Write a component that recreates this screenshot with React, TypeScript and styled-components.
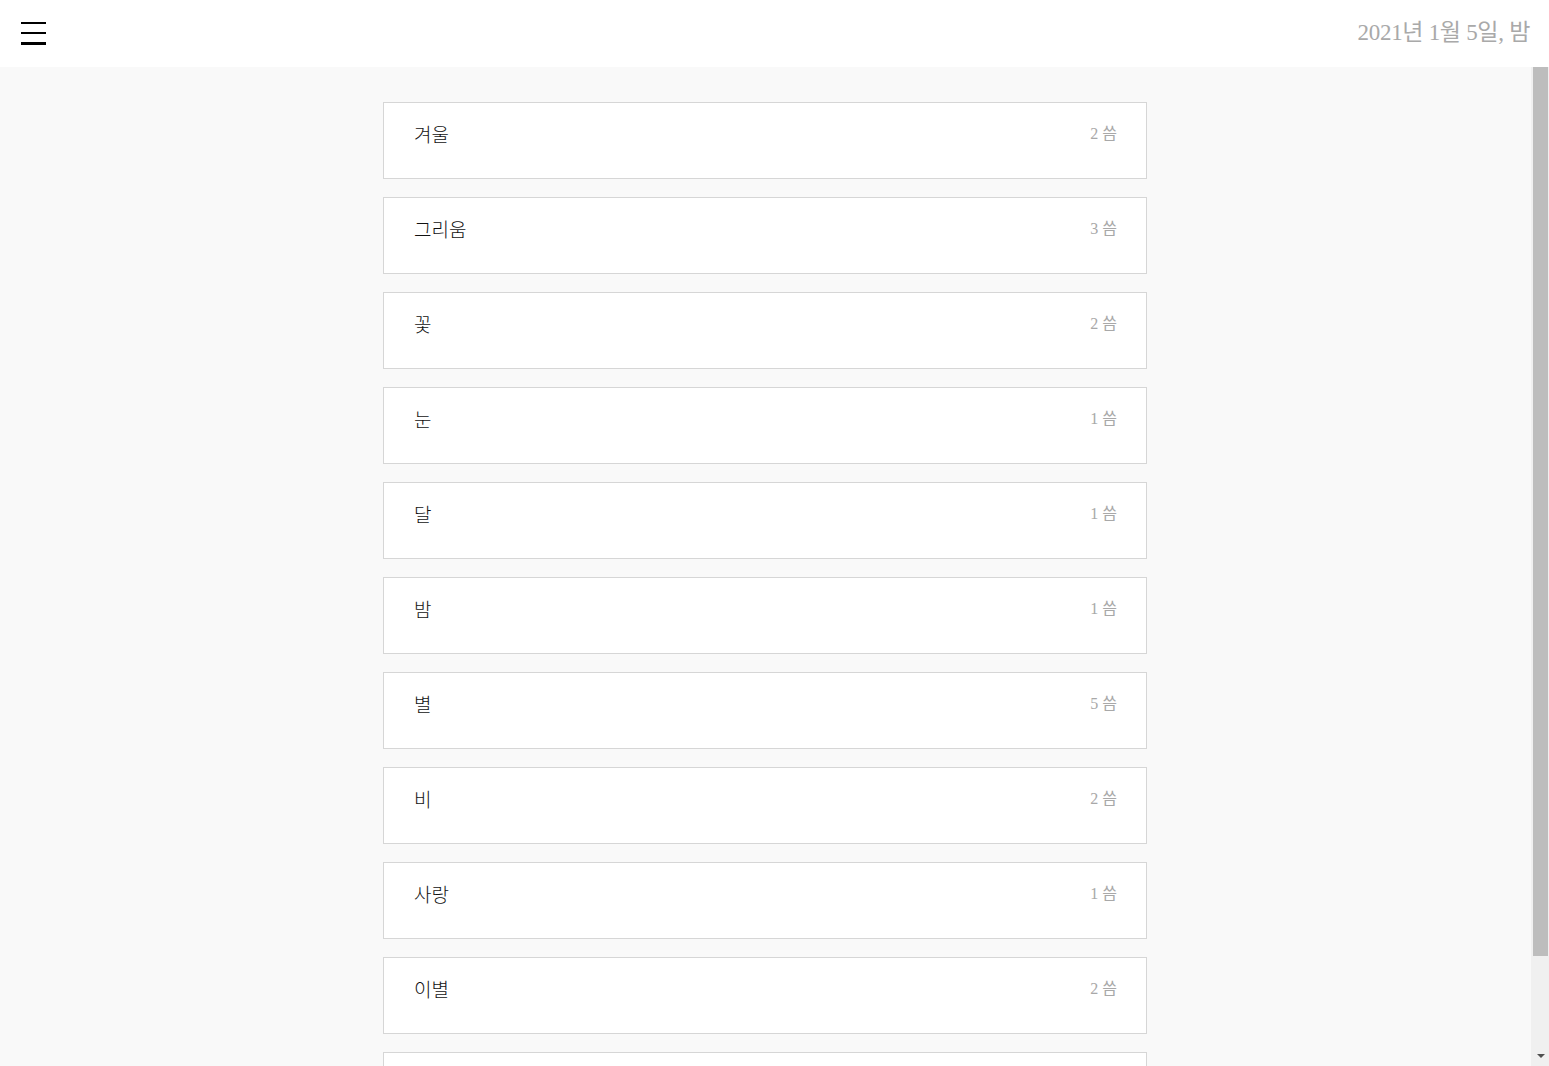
import React from "react";
import styled, { createGlobalStyle } from "styled-components";

const GlobalStyle = createGlobalStyle`
  html, body {
    margin: 0;
    padding: 0;
    height: 100%;
    overflow: hidden;
  }
  body {
    font-family: "Liberation Serif", "Noto Sans CJK KR", serif;
    background: #ffffff;
  }
  #root {
    height: 100%;
  }
`;

const Page = styled.div`
  display: flex;
  flex-direction: column;
  height: 100vh;
`;

const Header = styled.header`
  flex: 0 0 67px;
  height: 67px;
  display: flex;
  align-items: center;
  justify-content: space-between;
  padding: 0 19px 0 21px;
  background: #ffffff;
  box-sizing: border-box;
`;

const MenuButton = styled.button`
  display: flex;
  flex-direction: column;
  justify-content: space-between;
  width: 25px;
  height: 23px;
  padding: 0;
  margin: 0 0 1px 0;
  border: none;
  background: transparent;
  cursor: pointer;
`;

const MenuLine = styled.span`
  display: block;
  width: 25px;
  height: 2.5px;
  background: #000000;
`;

const DateText = styled.div`
  font-family: "Liberation Serif", "Noto Sans CJK KR", serif;
  font-size: 23px;
  line-height: 30px;
  letter-spacing: -0.3px;
  color: #a9a9a9;
  margin-bottom: 2px;
`;

const Body = styled.div`
  flex: 1 1 auto;
  min-height: 0;
  display: flex;
  background: #f9f9f9;
`;

const Main = styled.main`
  flex: 1 1 auto;
  overflow-y: auto;
  padding-right: 1px;
  scrollbar-width: none;
  &::-webkit-scrollbar {
    display: none;
  }
`;

const ScrollTrack = styled.div`
  flex: 0 0 18px;
  display: flex;
  flex-direction: column;
  align-items: center;
  background: #f0f0f0;
  padding: 0 1px 0 2px;
  box-sizing: border-box;
`;

const ScrollThumb = styled.div`
  width: 15px;
  height: 889px;
  background: #bdbdbd;
`;

const ScrollArrow = styled.div`
  margin-top: auto;
  margin-bottom: 8px;
  width: 0;
  height: 0;
  border-left: 4px solid transparent;
  border-right: 4px solid transparent;
  border-top: 4px solid #505050;
`;

const List = styled.ul`
  list-style: none;
  margin: 0 auto;
  padding: 35px 0 35px;
  width: 764px;
  display: flex;
  flex-direction: column;
  gap: 18px;
`;

const Card = styled.li`
  box-sizing: border-box;
  height: 77px;
  background: #ffffff;
  border: 1px solid #d6d6d6;
  padding: 17px 29px 0 30px;
  display: flex;
  justify-content: space-between;
  align-items: flex-start;
`;

const Title = styled.span`
  font-family: "Noto Sans CJK KR", "Liberation Sans", sans-serif;
  font-size: 19px;
  font-weight: 300;
  line-height: 28px;
  color: #111111;
`;

const Count = styled.span`
  font-family: "Liberation Serif", "Noto Sans CJK KR", serif;
  font-size: 16px;
  line-height: 28px;
  color: #a8a8a8;
`;

const topics: { name: string; count: number }[] = [
  { name: "겨울", count: 2 },
  { name: "그리움", count: 3 },
  { name: "꽃", count: 2 },
  { name: "눈", count: 1 },
  { name: "달", count: 1 },
  { name: "밤", count: 1 },
  { name: "별", count: 5 },
  { name: "비", count: 2 },
  { name: "사랑", count: 1 },
  { name: "이별", count: 2 },
  { name: "하늘", count: 3 },
];

export default function App() {
  return (
    <>
      <GlobalStyle />
      <Page>
        <Header>
          <MenuButton aria-label="메뉴">
            <MenuLine />
            <MenuLine />
            <MenuLine />
          </MenuButton>
          <DateText>2021년 1월 5일, 밤</DateText>
        </Header>
        <Body>
          <Main>
            <List>
              {topics.map((t) => (
                <Card key={t.name}>
                  <Title>{t.name}</Title>
                  <Count>{t.count} 씀</Count>
                </Card>
              ))}
            </List>
          </Main>
          <ScrollTrack aria-hidden="true">
            <ScrollThumb />
            <ScrollArrow />
          </ScrollTrack>
        </Body>
      </Page>
    </>
  );
}
